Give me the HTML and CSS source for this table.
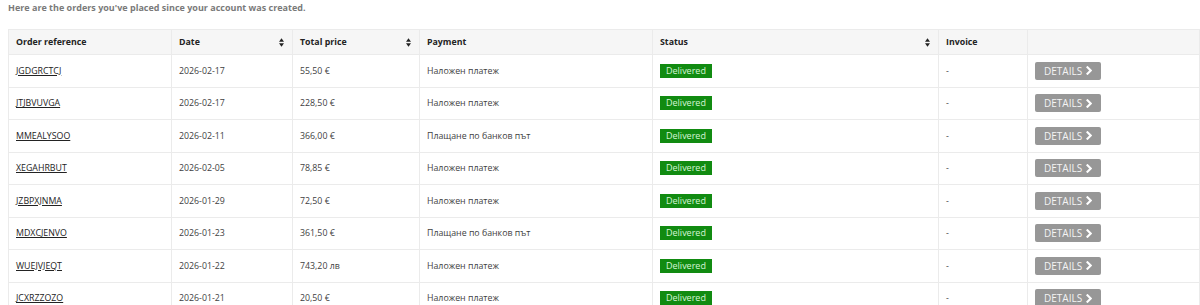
FILE: index.html
```html
<!DOCTYPE html>
<html lang="en">
<head>
    <meta charset="UTF-8">
    <meta name="viewport" content="width=device-width, initial-scale=1.0">
    <title>Order history</title>
    <link rel="stylesheet" href="styles.css">
</head>
<body>
    <p class="intro">Here are the orders you've placed since your account was created.</p>

    <table class="orders">
        <thead>
            <tr>
                <th class="col-ref">Order reference</th>
                <th class="col-date sortable">Date <svg class="sort" viewBox="0 0 6 10"><path d="M3 0 L6 4 H0 Z M3 10 L6 6 H0 Z"/></svg></th>
                <th class="col-price sortable">Total price <svg class="sort" viewBox="0 0 6 10"><path d="M3 0 L6 4 H0 Z M3 10 L6 6 H0 Z"/></svg></th>
                <th class="col-pay">Payment</th>
                <th class="col-status sortable">Status <svg class="sort" viewBox="0 0 6 10"><path d="M3 0 L6 4 H0 Z M3 10 L6 6 H0 Z"/></svg></th>
                <th class="col-inv">Invoice</th>
                <th class="col-act"></th>
            </tr>
        </thead>
        <tbody>
            <tr>
                <td><a href="#">JGDGRCTCJ</a></td>
                <td>2026-02-17</td>
                <td>55,50 €</td>
                <td>Наложен платеж</td>
                <td><span class="badge">Delivered</span></td>
                <td>-</td>
                <td><a class="details" href="#">DETAILS <svg viewBox="0 0 8 10"><path d="M2 0.5 L6.5 5 L2 9.5" /></svg></a></td>
            </tr>
            <tr>
                <td><a href="#">JTJBVUVGA</a></td>
                <td>2026-02-17</td>
                <td>228,50 €</td>
                <td>Наложен платеж</td>
                <td><span class="badge">Delivered</span></td>
                <td>-</td>
                <td><a class="details" href="#">DETAILS <svg viewBox="0 0 8 10"><path d="M2 0.5 L6.5 5 L2 9.5" /></svg></a></td>
            </tr>
            <tr>
                <td><a href="#">MMEALYSOO</a></td>
                <td>2026-02-11</td>
                <td>366,00 €</td>
                <td>Плащане по банков път</td>
                <td><span class="badge">Delivered</span></td>
                <td>-</td>
                <td><a class="details" href="#">DETAILS <svg viewBox="0 0 8 10"><path d="M2 0.5 L6.5 5 L2 9.5" /></svg></a></td>
            </tr>
            <tr>
                <td><a href="#">XEGAHRBUT</a></td>
                <td>2026-02-05</td>
                <td>78,85 €</td>
                <td>Наложен платеж</td>
                <td><span class="badge">Delivered</span></td>
                <td>-</td>
                <td><a class="details" href="#">DETAILS <svg viewBox="0 0 8 10"><path d="M2 0.5 L6.5 5 L2 9.5" /></svg></a></td>
            </tr>
            <tr>
                <td><a href="#">JZBPXJNMA</a></td>
                <td>2026-01-29</td>
                <td>72,50 €</td>
                <td>Наложен платеж</td>
                <td><span class="badge">Delivered</span></td>
                <td>-</td>
                <td><a class="details" href="#">DETAILS <svg viewBox="0 0 8 10"><path d="M2 0.5 L6.5 5 L2 9.5" /></svg></a></td>
            </tr>
            <tr>
                <td><a href="#">MDXCJENVO</a></td>
                <td>2026-01-23</td>
                <td>361,50 €</td>
                <td>Плащане по банков път</td>
                <td><span class="badge">Delivered</span></td>
                <td>-</td>
                <td><a class="details" href="#">DETAILS <svg viewBox="0 0 8 10"><path d="M2 0.5 L6.5 5 L2 9.5" /></svg></a></td>
            </tr>
            <tr>
                <td><a href="#">WUEJVJEQT</a></td>
                <td>2026-01-22</td>
                <td>743,20 лв</td>
                <td>Наложен платеж</td>
                <td><span class="badge">Delivered</span></td>
                <td>-</td>
                <td><a class="details" href="#">DETAILS <svg viewBox="0 0 8 10"><path d="M2 0.5 L6.5 5 L2 9.5" /></svg></a></td>
            </tr>
            <tr>
                <td><a href="#">JCXRZZOZO</a></td>
                <td>2026-01-21</td>
                <td>20,50 €</td>
                <td>Наложен платеж</td>
                <td><span class="badge">Delivered</span></td>
                <td>-</td>
                <td><a class="details" href="#">DETAILS <svg viewBox="0 0 8 10"><path d="M2 0.5 L6.5 5 L2 9.5" /></svg></a></td>
            </tr>
        </tbody>
    </table>
</body>
</html>
```

FILE: styles.css
```css
body {
    margin: 0 0 0 8px;
    font-family: "Open Sans", sans-serif;
    color: #414141;
    overflow: hidden;
}

.intro {
    margin: 0;
    padding-top: 1px;
    height: 28px;
    font-size: 9px;
    font-weight: bold;
    color: #7a7a7a;
}

.orders {
    width: 1192px;
    border-collapse: collapse;
    table-layout: fixed;
    font-size: 8.8px;
}

.orders th,
.orders td {
    box-sizing: border-box;
    border: 1px solid #ebebeb;
    padding: 0 8px 0 7px;
    text-align: left;
    vertical-align: middle;
}

.orders th {
    height: 25px;
    background: #f6f6f6;
    color: #232323;
    font-size: 8.8px;
    font-weight: bold;
}

.orders td {
    height: 32.5px;
}

/* column widths */
.col-ref { width: 163px; }
.col-date { width: 121px; }
.col-price { width: 127px; }
.col-pay { width: 233px; }
.col-status { width: 286px; }
.col-inv { width: 89px; }

.sortable .sort {
    float: right;
    width: 5px;
    height: 9px;
    fill: #232323;
    margin-top: 2px;
}

.orders td a {
    color: #232323;
    text-decoration: underline;
}

.badge {
    display: inline-block;
    background: #118b11;
    color: #d7f5d7;
    padding: 1px 6px;
    line-height: 12px;
    font-size: 9px;
}

.orders td a.details {
    display: inline-flex;
    align-items: center;
    gap: 3px;
    background: #979797;
    color: #f4f4f4;
    text-decoration: none;
    font-size: 10px;
    height: 18px;
    padding: 0 9px;
    border-radius: 2px;
}

.details svg {
    width: 7px;
    height: 9px;
    fill: none;
    stroke: #fff;
    stroke-width: 2.4;
}
```
